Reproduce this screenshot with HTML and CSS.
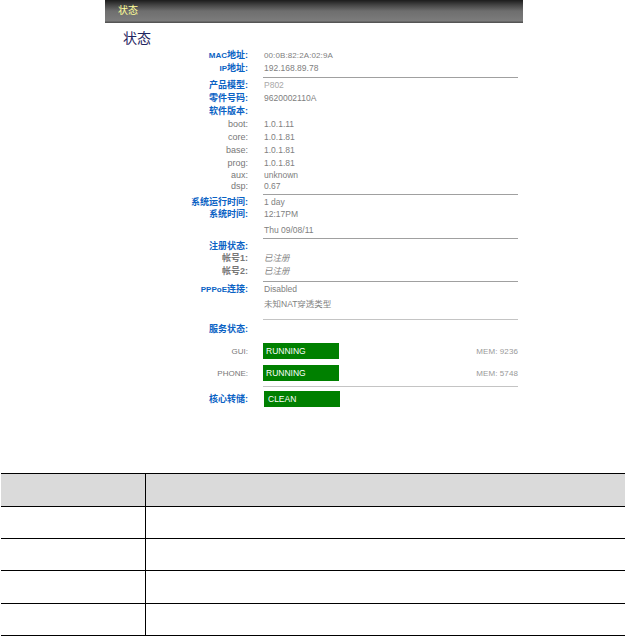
FILE: index.html
```html
<!DOCTYPE html>
<html lang="zh">
<head>
<meta charset="utf-8">
<title>状态</title>
<link rel="stylesheet" href="styles.css">
</head>
<body>
<section class="panel">
  <header class="topbar">状态</header>
  <h1 class="title">状态</h1>
  <div class="rows">
    <div class="row h13"><span class="label key"><span class="caps">MAC</span>地址:</span><span class="value small">00:0B:82:2A:02:9A</span></div>
    <div class="row h13"><span class="label key"><span class="caps">IP</span>地址:</span><span class="value">192.168.89.78</span></div>
    <hr class="rule r-a">
    <div class="row h14"><span class="label key">产品模型:</span><span class="value light">P802</span></div>
    <div class="row h13"><span class="label key">零件号码:</span><span class="value">9620002110A</span></div>
    <div class="row h13"><span class="label key">软件版本:</span></div>
    <div class="row h13"><span class="label"><span class="latin">boot:</span></span><span class="value">1.0.1.11</span></div>
    <div class="row h13"><span class="label"><span class="latin">core:</span></span><span class="value">1.0.1.81</span></div>
    <div class="row h13"><span class="label"><span class="latin">base:</span></span><span class="value">1.0.1.81</span></div>
    <div class="row h12"><span class="label"><span class="latin">prog:</span></span><span class="value">1.0.1.81</span></div>
    <div class="row h12"><span class="label"><span class="latin">aux:</span></span><span class="value">unknown</span></div>
    <div class="row h11"><span class="label"><span class="latin">dsp:</span></span><span class="value">0.67</span></div>
    <hr class="rule r-b">
    <div class="row h12"><span class="label key">系统运行时间:</span><span class="value">1 day</span></div>
    <div class="row h12"><span class="label key">系统时间:</span><span class="value">12:17PM</span></div>
    <div class="row h12 gap4"><span class="label"></span><span class="value">Thu 09/08/11</span></div>
    <hr class="rule r-c">
    <div class="row h12"><span class="label key">注册状态:</span></div>
    <div class="row h12"><span class="label">帐号1:</span><span class="value italic">已注册</span></div>
    <div class="row h12 gap1"><span class="label">帐号2:</span><span class="value italic">已注册</span></div>
    <hr class="rule r-d">
    <div class="row h12"><span class="label key"><span class="caps">PPPoE</span>连接:</span><span class="value">Disabled</span></div>
    <div class="row h12 gap3"><span class="label"></span><span class="value">未知NAT穿透类型</span></div>
    <hr class="rule r-e">
    <div class="row h12"><span class="label key">服务状态:</span></div>
    <div class="row bar-row gap8">
      <span class="label"><span class="caps">GUI:</span></span>
      <span class="bar">RUNNING</span>
      <span class="mem">MEM: 9236</span>
    </div>
    <div class="row bar-row gap6">
      <span class="label"><span class="caps">PHONE:</span></span>
      <span class="bar">RUNNING</span>
      <span class="mem">MEM: 5748</span>
    </div>
    <hr class="rule r-f">
    <div class="row bar-row gap4">
      <span class="label key">核心转储:</span>
      <span class="bar bar-clean">CLEAN</span>
    </div>
  </div>
</section>
<table class="blank-table">
  <colgroup><col class="c1"><col class="c2"></colgroup>
  <thead><tr class="head"><th></th><th></th></tr></thead>
  <tbody>
    <tr><td></td><td></td></tr>
    <tr><td></td><td></td></tr>
    <tr class="tall"><td></td><td></td></tr>
    <tr><td></td><td></td></tr>
  </tbody>
</table>
</body>
</html>
```
FILE: styles.css
```css
* { box-sizing: border-box; }
html, body { margin: 0; padding: 0; background: #fff; }
body {
  width: 625px;
  height: 636px;
  overflow: hidden;
  font-family: "Liberation Sans", "Noto Sans CJK SC", sans-serif;
}
.panel {
  width: 418px;
  height: 473px;
  margin-left: 105px;
}
.topbar {
  height: 23px;
  padding: 4px 0 0 13px;
  font-size: 10px;
  line-height: 14px;
  color: #ffff99;
  background: linear-gradient(#1c1c1c 0, #444 5px, #6e6e6e 11px, #7c7c7c 21px, #555 22px);
}
.title {
  margin: 7px 0 0 18px;
  height: 19px;
  font-size: 14px;
  line-height: 17px;
  font-weight: normal;
  color: #1f2560;
}
.rows { width: 413px; }
.row {
  display: flex;
  align-items: center;
  font-size: 9px;
  line-height: 11px;
}
.h11 { height: 11px; }
.h12 { height: 12px; }
.h13 { height: 13px; }
.h14 { height: 14px; }
.gap1 { margin-top: 1px; }
.gap3 { margin-top: 3px; }
.gap4 { margin-top: 4px; }
.gap6 { margin-top: 6px; }
.gap8 { margin-top: 8px; }
.label {
  flex: 0 0 143px;
  text-align: right;
  color: #777;
  font-weight: bold;
}
.latin { font-weight: normal; }
.caps { font-size: 8px; }
.label:not(.key) .caps { font-weight: normal; }
.key { color: #0a62c4; }
.value {
  margin-left: 16px;
  color: #808080;
  font-size: 8.5px;
}
.small { font-size: 8px; letter-spacing: 0.1px; }
.light { color: #a8a8a8; }
.italic { font-style: italic; }
.rule {
  width: 255px;
  height: 1px;
  margin: 0 0 0 158px;
  border: 0;
  background: #a0a0a0;
}
.r-a { margin-top: 2px; }
.r-b { margin-top: 2px; margin-bottom: 1px; }
.r-c { margin-top: 2px; margin-bottom: 1px; }
.r-d { margin-top: 4px; margin-bottom: 1px; }
.r-e { margin-top: 9px; margin-bottom: 3px; background: #c4c4c4; }
.r-f { margin-top: 5px; background: #c4c4c4; }
.bar-row { height: 16px; }
.bar {
  flex: 0 0 76px;
  height: 16px;
  margin-left: 15px;
  padding-left: 3px;
  background: #008000;
  color: #fff;
  font-size: 8.5px;
  line-height: 16px;
}
.bar-clean {
  margin-left: 16px;
  padding-left: 4px;
}
.mem {
  margin-left: auto;
  color: #999;
  font-size: 8px;
  letter-spacing: 0.1px;
}
.blank-table {
  width: 624px;
  margin-left: 1px;
  border-collapse: collapse;
  table-layout: fixed;
}
.c1 { width: 144px; }
.blank-table th, .blank-table td {
  height: 32px;
  padding: 0;
  border-top: 1px solid #000;
  border-bottom: 1px solid #000;
}
.blank-table th { height: 33px; }
.blank-table .tall td { height: 33px; }
.blank-table th + th, .blank-table td + td { border-left: 1px solid #000; }
.head { background: #dadada; }
```
